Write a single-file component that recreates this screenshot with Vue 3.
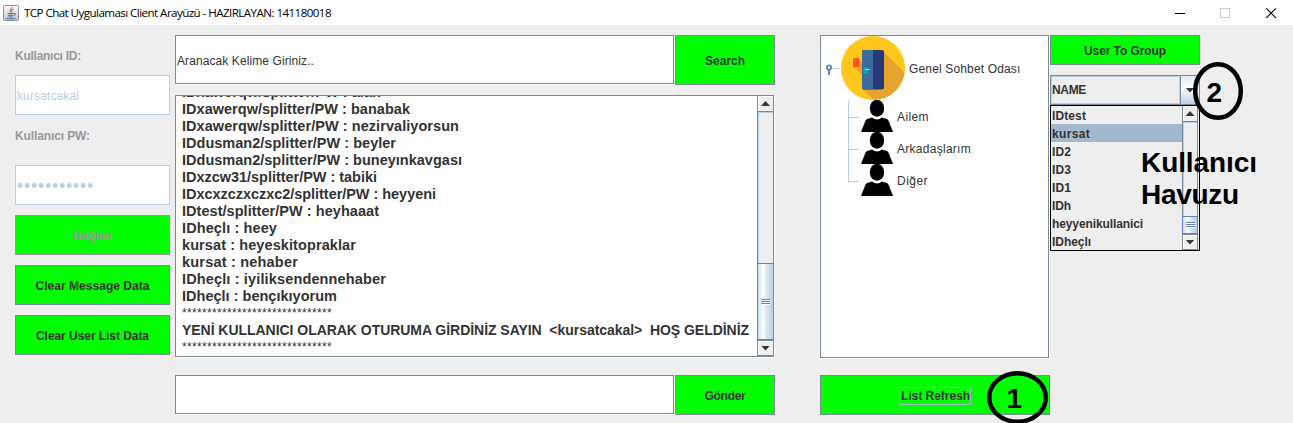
<script setup>
const messages = [
  { text: 'IDxawerqw/splitter/PW : alan', w: 199 },
  { text: 'IDxawerqw/splitter/PW : banabak', w: 228 },
  { text: 'IDxawerqw/splitter/PW : nezirvaliyorsun', w: 277 },
  { text: 'IDdusman2/splitter/PW : beyler', w: 214 },
  { text: 'IDdusman2/splitter/PW : buneyınkavgası', w: 280 },
  { text: 'IDxzcw31/splitter/PW : tabiki', w: 195 },
  { text: 'IDxcxzczxczxc2/splitter/PW : heyyeni', w: 254 },
  { text: 'IDtest/splitter/PW : heyhaaat', w: 197 },
  { text: 'IDheçlı : heey', w: 95 },
  { text: 'kursat : heyeskitopraklar', w: 174 },
  { text: 'kursat : nehaber', w: 116 },
  { text: 'IDheçlı : iyiliksendennehaber', w: 204 },
  { text: 'IDheçlı : bençıkıyorum', w: 155 },
  { text: '******************************', w: 150, kind: 'stars' },
  { text: 'YENİ KULLANICI OLARAK OTURUMA GİRDİNİZ SAYIN  <kursatcakal>  HOŞ GELDİNİZ', w: 567, kind: 'notice' },
  { text: '******************************', w: 150, kind: 'stars' },
]
const friends = [
  { name: 'Ailem', w: 32 },
  { name: 'Arkadaşlarım', w: 74 },
  { name: 'Diğer', w: 31 },
]
const users = [
  { name: 'IDtest', w: 34 },
  { name: 'kursat', w: 38, selected: true },
  { name: 'ID2', w: 19 },
  { name: 'ID3', w: 19 },
  { name: 'ID1', w: 19 },
  { name: 'IDh', w: 19 },
  { name: 'heyyenikullanici', w: 91 },
  { name: 'IDheçlı', w: 39 },
]

// Spreads the letters of a label so that it takes the given width.
const vFit = {
  mounted(el, { value }) {
    const extra = value - el.getBoundingClientRect().width
    el.style.letterSpacing = `${extra / el.textContent.length}px`
  },
}
</script>

<template>
  <div class="window">
    <header class="titlebar">
      <svg class="java" width="16" height="16" viewBox="0 0 16 16">
        <defs>
          <linearGradient id="jg" x1="0" y1="0" x2="0" y2="1">
            <stop offset="0" stop-color="#fdfdfd" />
            <stop offset="1" stop-color="#b9c6d1" />
          </linearGradient>
        </defs>
        <rect x=".5" y=".5" width="15" height="15" rx="1" fill="url(#jg)" stroke="#8295a5" />
        <path d="M8.6 1.8C9.8 3.6 6.2 4.4 7.2 6.2L8.2 7.6M10.4 4.2C8.6 5 8.3 5.800 9.200 7.300" fill="none" stroke="#e8641b" stroke-width="1.1" />
        <path d="M4.6 8.5h6.2M5.2 10.3h5M5.6 12h4M3.4 13.2c2 1 7 1 9.2 0M11 8.6c2-.4 2 1.8-.3 2.2" fill="none" stroke="#3f6f96" stroke-width="1" />
      </svg>
      <span v-fit="307" class="title">TCP Chat Uygulaması Client Arayüzü - HAZIRLAYAN: 141180018</span>
      <svg class="controls" width="106" height="12" viewBox="0 0 106 12">
        <path d="M0 6.5h10" stroke="#000" />
        <rect x="45.5" y="1.5" width="9" height="9" fill="none" stroke="#ccc" />
        <path d="M91.3 1.3l9.6 9.6M100.9 1.3l-9.6 9.6" stroke="#000" stroke-width="1.1" />
      </svg>
    </header>

    <main class="content">
      <section class="login">
        <div class="label"><span v-fit="66">Kullanıcı ID:</span></div>
        <div class="off-field"><span v-fit="62">kursatcakal</span></div>
        <div class="label pw"><span v-fit="75">Kullanıcı PW:</span></div>
        <div class="off-field"><span v-fit="77" class="dots">•••••••••••</span></div>
        <div class="btn off"><span v-fit="39">Bağlan</span></div>
        <div class="btn"><span v-fit="114">Clear Message Data</span></div>
        <div class="btn"><span v-fit="113">Clear User List Data</span></div>
      </section>

      <section class="chat">
        <div class="row search">
          <div class="field"><span v-fit="137">Aranacak Kelime Giriniz..</span></div>
          <div class="btn"><span v-fit="40">Search</span></div>
        </div>
        <div class="log">
          <div class="lines">
            <div v-for="(m, i) in messages" :key="i" class="line" :class="m.kind">
              <span v-fit="m.w">{{ m.text }}</span>
            </div>
          </div>
          <div class="bar">
            <div class="arrow-btn"><i class="up"></i></div>
            <div class="track"></div>
            <div class="thumb"><i class="grip"></i></div>
            <div class="arrow-btn last"><i class="down"></i></div>
          </div>
        </div>
        <div class="row send">
          <div class="field"></div>
          <div class="btn"><span v-fit="41">Gönder</span></div>
        </div>
      </section>

      <section class="rooms">
        <div class="tree">
          <div class="root">
            <svg class="knob" width="20" height="64" viewBox="0 0 20 64">
              <path d="M11 32.5h7" stroke="#b8cfe5" />
              <path d="M8 34v5" stroke="#6382bf" stroke-width="2" />
              <circle cx="8" cy="31.500" r="2.200" fill="#fff" stroke="#6382bf" stroke-width="1.800" />
            </svg>
            <svg width="64" height="64" viewBox="0 0 64 64">
              <defs><clipPath id="disc"><circle cx="32" cy="32" r="32" /></clipPath></defs>
              <circle cx="32" cy="32" r="32" fill="#ffc61b" />
              <g clip-path="url(#disc)" fill="#e8a32e">
                <path d="M42 15L70 43V70H38.500L21.500 53z" />
                <path d="M17 22L23 28V41L12.500 30.500z" />
              </g>
              <rect x="12" y="22" width="6.200" height="9" rx="1" fill="#ff5419" />
              <rect x="21" y="14" width="22" height="39.500" rx="2" fill="#263a7a" />
              <path d="M32 14h-9q-2 0-2 2v35.500q0 2 2 2h9z" fill="#3b6c9b" />
              <rect x="22.500" y="31" width="4.500" height="7" rx=".8" fill="#00adb0" />
              <path d="M24 33.500h5" stroke="#ffc61b" />
            </svg>
            <span v-fit="111.500" class="room">Genel Sohbet Odası</span>
          </div>
          <div class="children">
            <div v-for="f in friends" :key="f.name" class="friend">
              <svg width="32" height="32" viewBox="0 0 32 32">
                <ellipse cx="16" cy="8.300" rx="7.200" ry="8.500" />
                <path d="M0 32L4.300 21Q5 19.200 7 18.700L11 17.400Q16 21.500 21 17.400L25 18.700Q27 19.200 27.700 21L32 32z" />
              </svg>
              <span v-fit="f.w">{{ f.name }}</span>
            </div>
          </div>
        </div>
        <div class="btn refresh"><span class="focus"><span v-fit="69">List Refresh</span></span></div>
      </section>

      <section class="groups">
        <div class="btn group"><span v-fit="82">User To Group</span></div>
        <div class="combo">
          <div class="value"><span v-fit="34">NAME</span></div>
          <div class="drop"><i class="down"></i></div>
        </div>
        <div class="popup">
          <div class="items">
            <div v-for="u in users" :key="u.name" class="item" :class="{ selected: u.selected }">
              <span v-fit="u.w">{{ u.name }}</span>
            </div>
          </div>
          <div class="bar">
            <div class="arrow-btn"><i class="up"></i></div>
            <div class="track"></div>
            <div class="thumb small"><i class="grip"></i></div>
            <div class="arrow-btn last"><i class="down"></i></div>
          </div>
        </div>
      </section>
    </main>

    <svg class="notes" width="1293" height="423" viewBox="0 0 1293 423">
      <g fill="none" stroke="#000" stroke-width="4.500">
        <ellipse cx="1218" cy="91" rx="22.800" ry="26.800" />
        <ellipse cx="1017.500" cy="397.500" rx="28.300" ry="24.200" />
      </g>
      <text x="1206.500" y="102">2</text>
      <text x="1006.500" y="408">1</text>
      <text x="1141" y="172" textLength="116">Kullanıcı</text>
      <text x="1141" y="204" textLength="98">Havuzu</text>
    </svg>
  </div>
</template>

<style>
body { margin: 0; overflow: hidden; }
</style>

<style scoped>
* { box-sizing: border-box; }
.window {
  position: relative;
  width: 1293px;
  height: 423px;
  overflow: hidden;
  background: #eee;
  color: #333;
  font: 12px/14px "Liberation Sans", Arial, sans-serif;
}
span { white-space: pre; display: inline-block; }
svg { display: block; flex: none; }

.titlebar {
  display: flex;
  align-items: center;
  height: 25px;
  padding: 0 12px 0 3px;
  background: #fff;
}
.title { margin-left: 5px; font: 11.6px/16px "Open Sans", "Noto Sans", sans-serif; color: #000; }
.controls { margin-left: auto; }

.content { display: flex; padding: 10px 0 0 15px; }

.btn {
  display: flex;
  align-items: center;
  justify-content: center;
  flex: none;
  height: 40px;
  padding-top: 1px;
  border: 1px solid #7a8a99;
  background: #0f0;
  font-weight: bold;
}
.off { border-color: #999; color: #999; }

.login { display: flex; flex-direction: column; width: 155px; margin-right: 5px; }
.label { display: flex; align-items: center; height: 40px; padding-top: 1px; color: #999; font-weight: bold; }
.pw { margin-bottom: 10px; }
.off-field {
  display: flex;
  align-items: center;
  height: 40px;
  padding: 2px 0 0 1px;
  border: 1px solid #b8cfe5;
  background: #fff;
  color: #b8cfe5;
}
.dots { font-size: 18px; }
.login .btn { margin-top: 10px; }

.chat { width: 600px; margin-right: 45px; }
.row { display: flex; }
.field {
  display: flex;
  align-items: center;
  width: 499px;
  margin: 0 1px 1px 0;
  padding: 2px 0 0 1px;
  border: 1px solid #7a8a99;
  background: #fff;
  box-shadow: 1px 1px 0 #fff;
}
.row .btn { width: 100px; }
.search .btn { height: 50px; }
.log {
  display: flex;
  width: 599px;
  height: 262px;
  margin: 10px 0 18px;
  border: 1px solid #7a8a99;
  background: #fff;
  box-shadow: 1px 1px 0 #fff;
}
.lines {
  display: flex;
  flex-direction: column;
  justify-content: flex-end;
  flex: 1;
  height: 260px;
  padding: 0 0 0 6px;
  overflow: hidden;
}
.line { flex: none; height: 17px; font: bold 14.5px/17px "Liberation Sans", Arial, sans-serif; }
.notice { font-size: 14px; }
.stars { font-weight: normal; font-size: 12px; }

.bar { display: flex; flex-direction: column; width: 16px; border-left: 1px solid #7a8a99; background: #eee; }
.arrow-btn {
  display: flex;
  align-items: center;
  justify-content: center;
  height: 16px;
  border-bottom: 1px solid #7a8a99;
  box-shadow: inset 1px 1px 0 #fff;
}
.last { border-top: 1px solid #7a8a99; }
.track { flex: 1; border-left: 1px solid #b8cfe5; border-top: 1px solid #b8cfe5; }
.thumb {
  display: flex;
  align-items: center;
  justify-content: center;
  height: 77px;
  margin-left: -1px;
  border: 1px solid #6382bf;
  border-right: 0;
  background: linear-gradient(90deg, #c8dcef, #fff 35%, #dce8f3 55%, #b8cfe5);
}
.small { height: 18px; }
.grip {
  width: 9px;
  height: 6px;
  background: repeating-linear-gradient(#6382bf 0 1px, #fff 1px 2px);
}
.up, .down { width: 9px; height: 5px; background: #333; }
.up { clip-path: polygon(50% 0, 100% 100%, 0 100%); }
.down { clip-path: polygon(0 0, 100% 0, 50% 100%); }

.rooms { width: 230px; }
.tree {
  width: 229px;
  height: 323px;
  margin-bottom: 17px;
  border: 1px solid #7a8a99;
  background: #fff;
  box-shadow: 1px 1px 0 #fff;
}
.root, .friend { display: flex; align-items: center; }
.room { margin: 2px 0 0 4px; }
.children { padding-left: 27px; }
.friend { position: relative; height: 32px; padding-left: 13px; }
.friend span { margin: 2px 0 0 4px; }
.friend::before {
  content: "";
  position: absolute;
  left: 0;
  top: 0;
  width: 10px;
  height: 17px;
  border: solid #b8cfe5;
  border-width: 0 0 1px 1px;
}
.friend:not(:last-child)::after {
  content: "";
  position: absolute;
  left: 0;
  top: 16px;
  height: 16px;
  border-left: 1px solid #b8cfe5;
}
.focus { padding: 1px 0 1px 1px; border: 1px solid #a3b8cc; }

.groups { width: 150px; }
.group { height: 30px; }
.combo { display: flex; height: 30px; margin-top: 10px; border: 1px solid #7a8a99; font-weight: bold; }
.value { display: flex; align-items: center; width: 129px; border: 1px solid #b8cfe5; }
.drop {
  display: flex;
  align-items: center;
  justify-content: center;
  flex: 1;
  border-left: 1px solid #7a8a99;
  background: linear-gradient(#dde8f3, #fff 40%, #b8cfe5);
}
.drop .down { flex: none; }
.popup { display: flex; height: 146px; padding-right: 1px; border: 1px solid #000; font-weight: bold; }
.items { flex: 1; }
.item { height: 18px; padding: 3px 0 0 1px; }
.selected { background: #a3b8cc; }
.popup .bar { border-right: 1px solid #7a8a99; }

.notes { position: absolute; left: 0; top: 0; }
.notes text { font: bold 28px "Liberation Sans", Arial, sans-serif; fill: #000; }
</style>
